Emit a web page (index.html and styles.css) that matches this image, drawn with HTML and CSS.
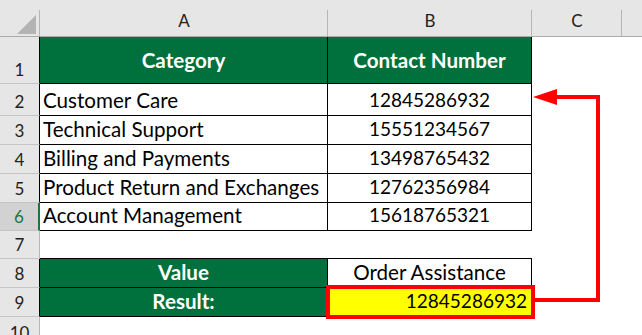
FILE: index.html
```html
<!DOCTYPE html>
<html>
<head>
<meta charset="utf-8">
<link rel="stylesheet" href="styles.css">
</head>
<body>
<div class="sheet">
  <div class="row hdr">
    <div class="corner"><span class="tri"></span></div>
    <div class="ch ca">A</div>
    <div class="ch cb">B</div>
    <div class="ch cc">C</div>
    <div class="ch cd"></div>
  </div>
  <div class="row r1">
    <div class="rh tb">1</div>
    <div class="cell ca t green th">Category</div>
    <div class="cell cb t green th">Contact Number</div>
    <div class="cell cc"></div>
  </div>
  <div class="row r2">
    <div class="rh tb">2</div>
    <div class="cell ca t left">Customer Care</div>
    <div class="cell cb t mid num">12845286932</div>
    <div class="cell cc"></div>
  </div>
  <div class="row r3">
    <div class="rh tb">3</div>
    <div class="cell ca t left">Technical Support</div>
    <div class="cell cb t mid num">15551234567</div>
    <div class="cell cc"></div>
  </div>
  <div class="row r4">
    <div class="rh tb">4</div>
    <div class="cell ca t left">Billing and Payments</div>
    <div class="cell cb t mid num">13498765432</div>
    <div class="cell cc"></div>
  </div>
  <div class="row r5">
    <div class="rh tb">5</div>
    <div class="cell ca t left">Product Return and Exchanges</div>
    <div class="cell cb t mid num">12762356984</div>
    <div class="cell cc"></div>
  </div>
  <div class="row r6">
    <div class="rh tb sel">6</div>
    <div class="cell ca t left">Account Management</div>
    <div class="cell cb t mid num">15618765321</div>
    <div class="cell cc"></div>
  </div>
  <div class="row r7">
    <div class="rh">7</div>
    <div class="cell ca blank"></div>
    <div class="cell cb blank"></div>
    <div class="cell cc"></div>
  </div>
  <div class="row r8">
    <div class="rh tb">8</div>
    <div class="cell ca t green th">Value</div>
    <div class="cell cb t mid">Order Assistance</div>
    <div class="cell cc"></div>
  </div>
  <div class="row r9">
    <div class="rh tb">9</div>
    <div class="cell ca t green th">Result:</div>
    <div class="cell cb t right yellow num">12845286932</div>
    <div class="cell cc"></div>
  </div>
  <div class="row r10">
    <div class="rh">10</div>
    <div class="cell ca blank"></div>
    <div class="cell cb blank"></div>
    <div class="cell cc"></div>
  </div>
  <svg class="overlay" width="642" height="335" viewBox="0 0 642 335">
    <rect x="328" y="287" width="205" height="30" fill="none" stroke="#ff0000" stroke-width="4"/>
    <path d="M535 300 H598 V97 H555" fill="none" stroke="#ff0000" stroke-width="4"/>
    <polygon points="533,97 557,89 557,105" fill="#ff0000"/>
  </svg>
</div>
</body>
</html>
```
FILE: styles.css
```css
html, body {
  margin: 0;
  padding: 0;
  background: #ffffff;
}
.sheet {
  position: relative;
  width: 642px;
  height: 335px;
  overflow: hidden;
  font-family: Lato, "Liberation Sans", sans-serif;
  color: #000;
}
.row {
  display: flex;
}
.hdr { height: 37px; }
.r1 { height: 47px; }
.r2 { height: 32px; }
.r3, .r4, .r5 { height: 29px; }
.r6, .r7 { height: 28px; }
.r8, .r9 { height: 29px; }
.r10 { height: 30px; }

.corner {
  width: 40px;
  box-sizing: border-box;
  background: linear-gradient(#b6b6b6, #b6b6b6) right 10px / 1px calc(100% - 10px) no-repeat, #e6e6e6;
  border-bottom: 1px solid #ababab;
  display: flex;
  justify-content: flex-end;
  align-items: flex-end;
  padding: 0 4px 2px 0;
}
.tri {
  width: 19px;
  height: 19px;
  background: #b4b4b4;
  clip-path: polygon(100% 0, 100% 100%, 0 100%);
}
.ch {
  box-sizing: border-box;
  background: linear-gradient(#b6b6b6, #b6b6b6) right 10px / 1px calc(100% - 10px) no-repeat, #e6e6e6;
  border-bottom: 1px solid #ababab;
  display: flex;
  justify-content: center;
  align-items: center;
  font-size: 17px;
  color: #222;
  padding-top: 4px;
}
.ca { width: 288px; }
.cb { width: 204px; }
.cc { width: 90px; }
.cd { flex: 1; background: #e6e6e6; }

.rh {
  width: 40px;
  box-sizing: border-box;
  background: #e6e6e6;
  border-right: 1px solid #b6b6b6;
  border-bottom: 1px solid #c4c4c4;
  display: flex;
  justify-content: center;
  align-items: flex-end;
  font-size: 17px;
  color: #222;
  padding-bottom: 3px;
}
.rh.tb { border-right-color: #000; }
.rh.sel {
  background: #d2d2d2;
  color: #217346;
  border-right: 2px solid #217346;
}

.cell {
  box-sizing: border-box;
  display: flex;
  align-items: flex-end;
  font-size: 20.6px;
  white-space: nowrap;
  padding-bottom: 3px;
}
.cell.num { font-size: 19px; padding-bottom: 4px; }
.cell.t {
  border-right: 1px solid #000;
  border-bottom: 1px solid #000;
}
.cell.blank { border-bottom: 0; }
.r7 .cell.ca, .r7 .cell.cb { border-bottom: 1px solid #000; }
.left { padding-left: 3px; }
.mid { justify-content: center; }
.right { justify-content: flex-end; padding-right: 4px; }
.green {
  background: #00703c;
  color: #fff;
  font-weight: 700;
  justify-content: center;
}
.r1 .cell { align-items: center; padding-bottom: 0; }
.yellow { background: #ffff00; }

.overlay {
  position: absolute;
  left: 0;
  top: 0;
}
```
